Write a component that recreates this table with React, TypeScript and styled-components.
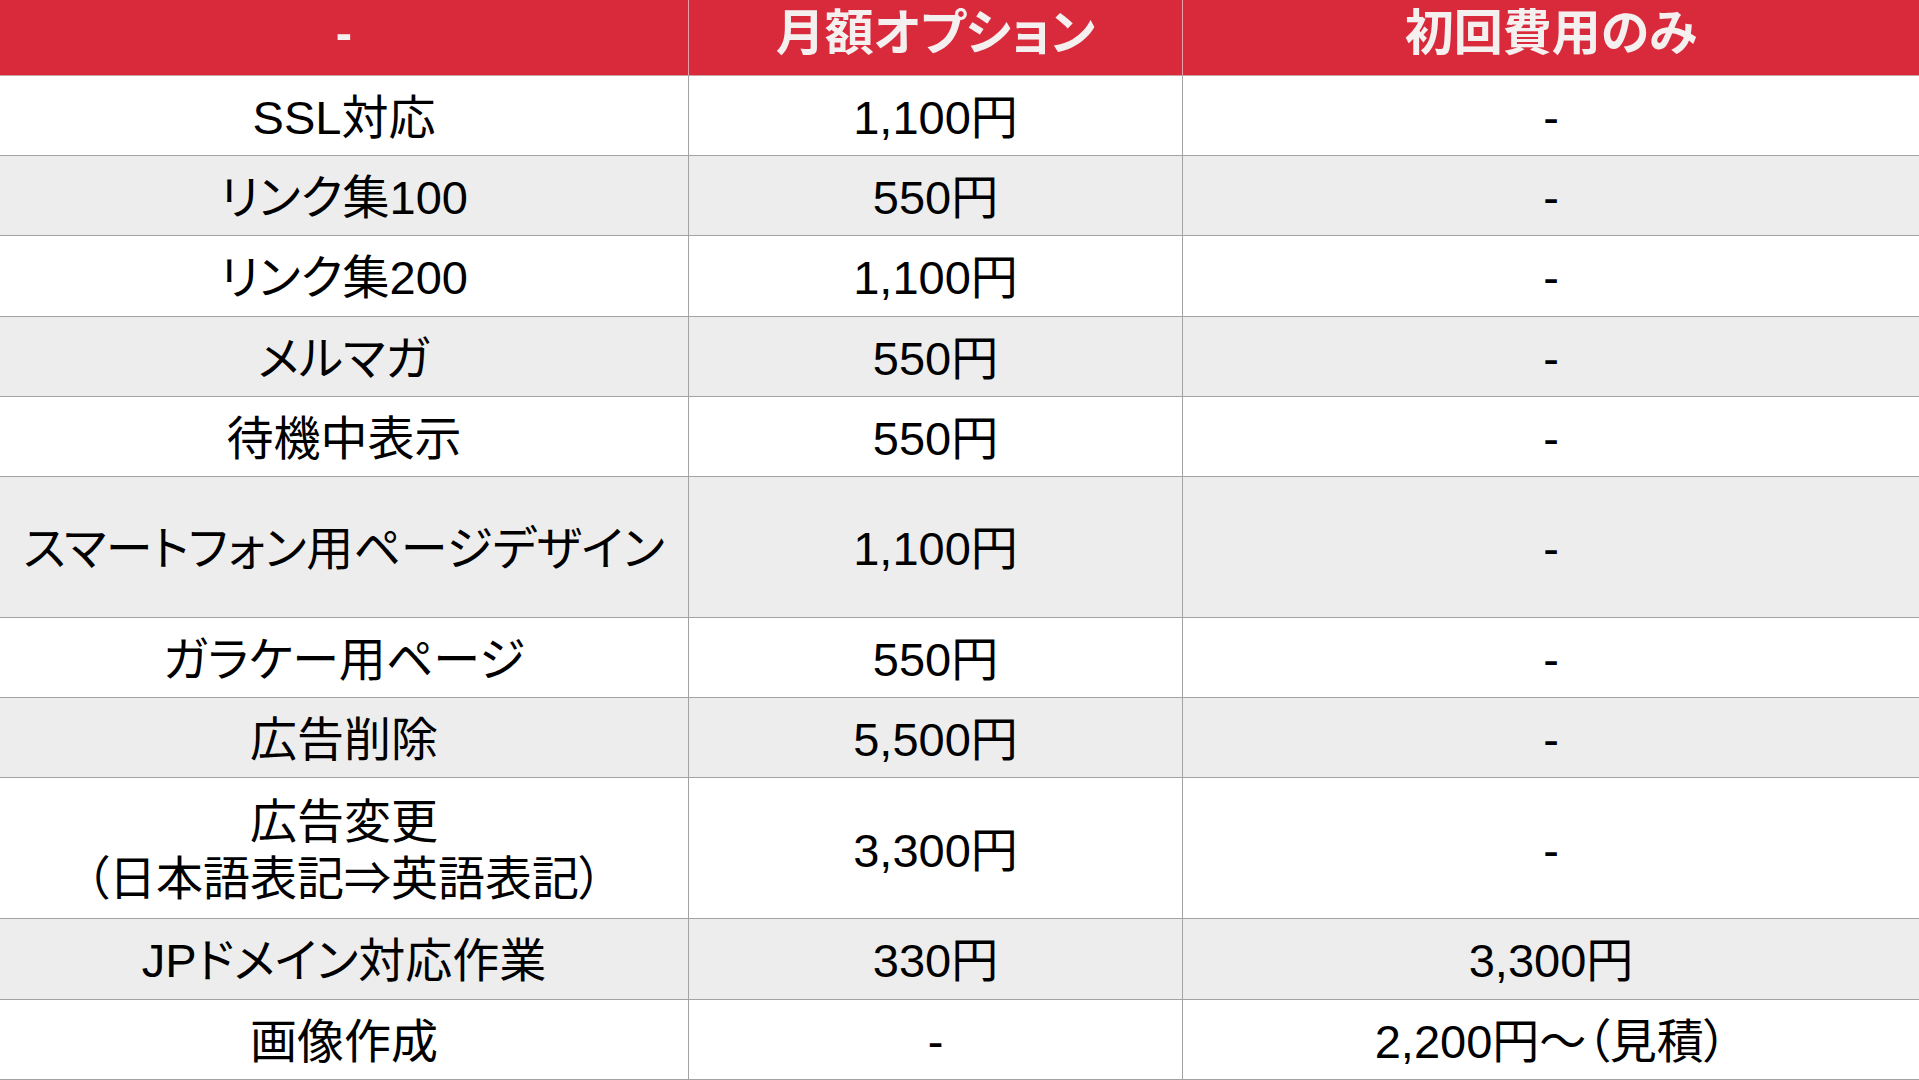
import React from 'react';
import styled, { createGlobalStyle } from 'styled-components';

const GlobalStyle = createGlobalStyle`
  html, body {
    margin: 0;
    padding: 0;
    background: #ffffff;
    overflow: hidden;
  }
  body {
    font-family: "Liberation Sans", "Noto Sans CJK JP", sans-serif;
  }
`;

interface OptionRow {
  name: string[];
  monthly: string;
  initial: string;
  tall?: boolean;
}

const ROWS: OptionRow[] = [
  { name: ['SSL対応'], monthly: '1,100円', initial: '-' },
  { name: ['リンク集100'], monthly: '550円', initial: '-' },
  { name: ['リンク集200'], monthly: '1,100円', initial: '-' },
  { name: ['メルマガ'], monthly: '550円', initial: '-' },
  { name: ['待機中表示'], monthly: '550円', initial: '-' },
  { name: ['スマートフォン用ページデザイン'], monthly: '1,100円', initial: '-', tall: true },
  { name: ['ガラケー用ページ'], monthly: '550円', initial: '-' },
  { name: ['広告削除'], monthly: '5,500円', initial: '-' },
  { name: ['広告変更', '（日本語表記⇒英語表記）'], monthly: '3,300円', initial: '-', tall: true },
  { name: ['JPドメイン対応作業'], monthly: '330円', initial: '3,300円' },
  { name: ['画像作成'], monthly: '-', initial: '2,200円～（見積）' },
];

const Table = styled.div`
  width: 1919px;
  height: 1080px;
  display: flex;
  flex-direction: column;
`;

const Row = styled.div<{ $height: number; $shade?: boolean }>`
  display: grid;
  grid-template-columns: 689px 494px 1fr;
  height: ${(p) => p.$height}px;
  background: ${(p) => (p.$shade ? '#ededed' : '#ffffff')};
  border-bottom: 1px solid #a3a3a3;
  box-sizing: border-box;
`;

const HeaderRow = styled(Row)`
  background: #d92a3b;
  border-bottom: 1px solid #c9a0a4;
`;

const Cell = styled.div`
  display: flex;
  flex-direction: column;
  align-items: center;
  justify-content: center;
  text-align: center;
  font-size: 47px;
  line-height: 57px;
  font-feature-settings: "palt";
  color: #000000;
  border-right: 1px solid #a3a3a3;
  white-space: nowrap;
  padding-top: 4px;

  &:last-child {
    border-right: none;
  }
`;

const HeadCell = styled(Cell)`
  color: #f4f0f0;
  font-weight: 700;
  font-size: 49px;
  padding-top: 0;
  padding-bottom: 8px;
  border-right: 1px solid #e6a0a6;
`;

const App: React.FC = () => {
  return (
    <>
      <GlobalStyle />
      <Table>
        <HeaderRow $height={76}>
          <HeadCell>-</HeadCell>
          <HeadCell>月額オプション</HeadCell>
          <HeadCell>初回費用のみ</HeadCell>
        </HeaderRow>
        {ROWS.map((row, i) => (
          <Row key={row.name[0]} $height={row.tall ? 141 : 80.2} $shade={i % 2 === 1}>
            <Cell>
              {row.name.map((line) => (
                <span key={line}>{line}</span>
              ))}
            </Cell>
            <Cell>{row.monthly}</Cell>
            <Cell>{row.initial}</Cell>
          </Row>
        ))}
      </Table>
    </>
  );
};

export default App;
